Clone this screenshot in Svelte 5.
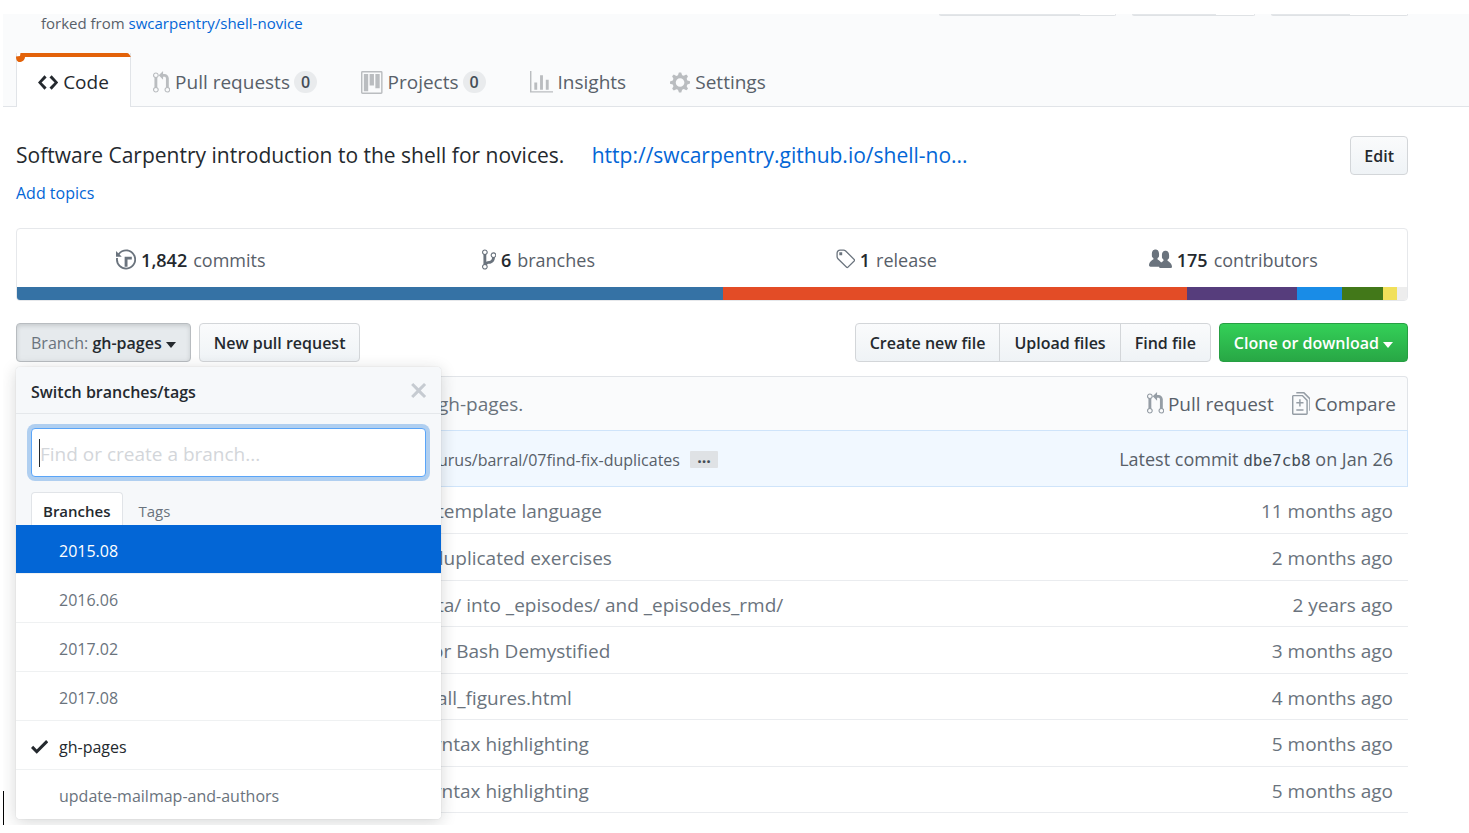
<script>
  const icons = {
    code: [14, 'M9.5 3L8 4.5 11.5 8 8 11.5 9.5 13 14 8 9.5 3zm-5 0L0 8l4.5 5L6 11.5 2.5 8 6 4.5 4.5 3z'],
    pull: [12, 'M11 11.28V5c-.03-.78-.34-1.47-.94-2.06C9.46 2.35 8.78 2.03 8 2H7V0L4 3l3 3V4h1c.27.02.48.11.69.31.21.2.3.42.31.69v6.28A1.993 1.993 0 0 0 10 15a1.993 1.993 0 0 0 1-3.72zm-1 2.92c-.66 0-1.2-.55-1.2-1.2 0-.65.55-1.2 1.2-1.2.65 0 1.2.55 1.2 1.2 0 .65-.55 1.2-1.2 1.2zM4 3c0-1.11-.89-2-2-2a1.993 1.993 0 0 0-1 3.72v6.56A1.993 1.993 0 0 0 2 15a1.993 1.993 0 0 0 1-3.72V4.72c.59-.34 1-.98 1-1.72zm-.8 10c0 .66-.55 1.2-1.2 1.2-.65 0-1.2-.55-1.2-1.2 0-.65.55-1.2 1.2-1.2.65 0 1.2.55 1.2 1.2zM2 4.2C1.34 4.2.8 3.65.8 3c0-.65.55-1.2 1.2-1.2.65 0 1.2.55 1.2 1.2 0 .65-.55 1.2-1.2 1.2z'],
    project: [15, 'M10 12h3V2h-3v10zm-4-2h3V2H6v8zm-4 4h3V2H2v12zm-1 1h13V1H1v14zM14 0H1a1 1 0 0 0-1 1v14a1 1 0 0 0 1 1h13a1 1 0 0 0 1-1V1a1 1 0 0 0-1-1z'],
    graph: [16, 'M16 14v1H0V0h1v14h15zM5 13H3V8h2v5zm4 0H7V3h2v10zm4 0h-2V6h2v7z'],
    gear: [14, 'M14 8.77v-1.6l-1.94-.64-.45-1.09.88-1.84-1.13-1.13-1.81.91-1.09-.45-.69-1.92h-1.6l-.63 1.94-1.11.45-1.84-.88-1.13 1.13.91 1.81-.45 1.09L0 7.23v1.59l1.94.64.45 1.09-.88 1.84 1.13 1.13 1.81-.91 1.09.45.69 1.92h1.59l.63-1.94 1.11-.45 1.84.88 1.13-1.13-.92-1.81.47-1.09L14 8.75v.02zM7 11c-1.66 0-3-1.34-3-3s1.34-3 3-3 3 1.34 3 3-1.34 3-3 3z'],
    history: [14, 'M8 13H6V6h5v2H8v5zM7 1C4.81 1 2.87 2.02 1.59 3.59L0 2v4h4L2.5 4.5C3.55 3.17 5.17 2.3 7 2.3c3.14 0 5.7 2.56 5.7 5.7s-2.56 5.7-5.7 5.7A5.71 5.71 0 0 1 1.3 8c0-.34.03-.67.09-1H.08C.03 7.33 0 7.66 0 8c0 3.86 3.14 7 7 7s7-3.14 7-7-3.14-7-7-7z'],
    branch: [10, 'M10 5c0-1.11-.89-2-2-2a1.993 1.993 0 0 0-1 3.72v.3c-.02.52-.23.98-.63 1.38-.4.4-.86.61-1.38.63-.83.02-1.48.16-2 .45V4.72a1.993 1.993 0 0 0-1-3.72C.88 1 0 1.89 0 3a2 2 0 0 0 1 1.72v6.56c-.59.35-1 .99-1 1.72 0 1.11.89 2 2 2 1.11 0 2-.89 2-2 0-.53-.2-1-.53-1.36.09-.06.48-.41.59-.47.25-.11.56-.17.94-.17 1.05-.05 1.95-.45 2.75-1.25S8.95 7.77 9 6.73h-.02C9.59 6.37 10 5.73 10 5zM2 1.8c.66 0 1.2.55 1.2 1.2 0 .65-.55 1.2-1.2 1.2C1.35 4.2.8 3.65.8 3c0-.65.55-1.2 1.2-1.2zm0 12.41c-.66 0-1.2-.55-1.2-1.2 0-.65.55-1.2 1.2-1.2.65 0 1.2.55 1.2 1.2 0 .65-.55 1.2-1.2 1.2zm6-8c-.66 0-1.2-.55-1.2-1.2 0-.65.55-1.2 1.2-1.2.65 0 1.2.55 1.2 1.2 0 .65-.55 1.2-1.2 1.2z'],
    tag: [14, 'M7.73 1.73C7.26 1.26 6.62 1 5.96 1H3.5C2.13 1 1 2.13 1 3.5v2.47c0 .66.27 1.3.73 1.77l6.06 6.06c.39.39 1.02.39 1.41 0l4.59-4.59a.996.996 0 0 0 0-1.41L7.73 1.73zM2.38 7.09c-.31-.3-.47-.7-.47-1.13V3.5c0-.88.72-1.59 1.59-1.59h2.47c.42 0 .83.16 1.13.47l6.14 6.13-4.73 4.73-6.13-6.15zM3.01 3h2v2H3V3h.01z'],
    people: [16, 'M16 12.999c0 .439-.45 1-1 1H7.995c-.539 0-.994-.447-.995-.999H1c-.54 0-1-.561-1-1 0-2.634 3-4 3-4s.229-.409 0-1c-.841-.621-1.058-.59-1-3 .058-2.419 1.367-3 2.5-3s2.442.58 2.5 3c.058 2.41-.159 2.379-1 3-.229.59 0 1 0 1s1.549.711 2.42 2.088C9.196 9.369 10 8.999 10 8.999s.229-.409 0-1c-.841-.62-1.058-.59-1-3 .058-2.419 1.367-3 2.5-3s2.437.581 2.495 3c.059 2.41-.158 2.38-1 3-.229.59 0 1 0 1s3.005 1.366 3.005 4z'],
    x: [12, 'M7.48 8l3.75 3.75-1.48 1.48L6 9.48l-3.75 3.75-1.48-1.48L4.52 8 .77 4.25l1.48-1.48L6 6.52l3.75-3.75 1.48 1.48z'],
    check: [12, 'M12 5l-8 8-4-4 1.5-1.5L4 10l6.5-6.5z'],
    diff: [13, 'M6 7h2v1H6v2H5V8H3V7h2V5h1v2zm-3 6h5v-1H3v1zM7.5 2L11 5.5V15c0 .55-.45 1-1 1H1c-.55 0-1-.45-1-1V3c0-.55.45-1 1-1h6.5zM10 6L7 3H1v12h9V6zM8.5 0H3v1h5l4 4v8h1V4.5L8.5 0z']
  };

  const tabs = [
    { name: 'Pull requests', icon: 'pull', count: 0 },
    { name: 'Projects', icon: 'project', count: 0 },
    { name: 'Insights', icon: 'graph' },
    { name: 'Settings', icon: 'gear' }
  ];

  const stats = [
    { icon: 'history', value: '1,842', label: 'commits' },
    { icon: 'branch', value: '6', label: 'branches' },
    { icon: 'tag', value: '1', label: 'release' },
    { icon: 'people', value: '175', label: 'contributors' }
  ];

  const languages = [
    { share: 706, color: '#3572a5' },
    { share: 464, color: '#e34c26' },
    { share: 110, color: '#563d7c' },
    { share: 45, color: '#198ce7' },
    { share: 41, color: '#427819' },
    { share: 14, color: '#f1e05a' },
    { share: 10, color: '#ededed' }
  ];

  const branches = ['2015.08', '2016.06', '2017.02', '2017.08', 'gh-pages', 'update-mailmap-and-authors'];
  let current = $state('gh-pages');
  let query = $state('');

  const files = [
    { message: 'template language', age: '11 months ago' },
    { message: 'duplicated exercises', age: '2 months ago', early: true },
    { message: 'ta/ into _episodes/ and _episodes_rmd/', age: '2 years ago' },
    { message: 'or Bash Demystified', age: '3 months ago', early: true },
    { message: 'all_figures.html', age: '4 months ago' },
    { message: 'yntax highlighting', age: '5 months ago', early: true },
    { message: 'yntax highlighting', age: '5 months ago', early: true }
  ];
</script>

{#snippet icon(name)}
  <svg class="icon {name}" viewBox="0 0 {icons[name][0]} 16" aria-hidden="true"><path fill-rule="evenodd" d={icons[name][1]} /></svg>
{/snippet}

<div class="page">
  <header>
    <div class="top">
      <p class="fork">forked from <a href="#top">swcarpentry/shell-novice</a></p>
      <div class="edges" aria-hidden="true">
        <span class="edge wide"></span><span class="edge mid"></span><span class="edge last"></span>
      </div>
    </div>
    <nav>
      <a class="tab active" href="#code">
        <svg class="stroke" viewBox="0 0 115 10" preserveAspectRatio="none" aria-hidden="true"><path d="M4.500 0H111C113 0 114 2 115 4H9C9 7 6 9 3.500 9 1 9 0 6.500 0 3.500L4 3Z" fill="#e36209" /></svg>
        {@render icon('code')}<span>Code</span>
      </a>
      {#each tabs as tab}
        <a class="tab" href="#{tab.icon}">
          {@render icon(tab.icon)}<span>{tab.name}</span>
          {#if tab.count !== undefined}<span class="count">{tab.count}</span>{/if}
        </a>
      {/each}
    </nav>
  </header>

  <main>
    <section class="about">
      <div>
        <h1>Software Carpentry introduction to the shell for novices. <a href="#site">http://swcarpentry.github.io/shell-no...</a></h1>
        <a class="topics" href="#topics">Add topics</a>
      </div>
      <button class="btn" type="button">Edit</button>
    </section>

    <section class="summary">
      <ul>
        {#each stats as s}
          <li><a href="#{s.label}">{@render icon(s.icon)}<strong>{s.value}</strong> <span>{s.label}</span></a></li>
        {/each}
      </ul>
      <div class="languages">
        {#each languages as l}<span style="flex-grow: {l.share}; background: {l.color}"></span>{/each}
      </div>
    </section>

    <section class="actions">
      <div class="picker">
        <button class="btn pressed" type="button" aria-expanded="true"><span class="light">Branch:</span> gh-pages<span class="caret"></span></button>
        <div class="menu">
          <div class="menu-head">
            <strong>Switch branches/tags</strong>
            <button type="button" aria-label="Close">{@render icon('x')}</button>
          </div>
          <div class="filter">
            <div class="field">
              <input type="text" aria-label="Find or create a branch" placeholder="Find or create a branch..." bind:value={query} />
              <span class="cursor"></span>
            </div>
            <div class="menu-tabs">
              <button type="button" class="selected">Branches</button>
              <button type="button">Tags</button>
            </div>
          </div>
          <ul class="list">
            {#each branches as b, i}
              <li>
                <button type="button" class:hot={i === 0} class:current={b === current} onclick={() => (current = b)}>
                  <span class="mark">{#if b === current}{@render icon('check')}{/if}</span>{b}
                </button>
              </li>
            {/each}
          </ul>
        </div>
      </div>
      <button class="btn" type="button">New pull request</button>
      <div class="group">
        <button class="btn" type="button">Create new file</button>
        <button class="btn" type="button">Upload files</button>
        <button class="btn" type="button">Find file</button>
      </div>
      <button class="btn primary" type="button">Clone or download<span class="caret"></span></button>
    </section>

    <section class="files">
      <div class="compare">
        <span class="message">gh-pages.</span>
        <a href="#pull">{@render icon('pull')}Pull request</a>
        <a href="#compare">{@render icon('diff')}Compare</a>
      </div>
      <div class="commit">
        <span class="message">urus/barral/07find-fix-duplicates</span>
        <button type="button" class="more">...</button>
        <span class="latest">Latest commit <code>dbe7cb8</code> on Jan 26</span>
      </div>
      <table>
        <tbody>
          {#each files as f}
            <tr>
              <td class="message" class:early={f.early}>{f.message}</td>
              <td class="age">{f.age}</td>
            </tr>
          {/each}
        </tbody>
      </table>
    </section>
  </main>
  <span class="page-cursor"></span>
</div>

<style>
  :global(body) { background: #fff; }
  .page, .page * { box-sizing: border-box; }
  .page {
    position: relative;
    margin: 14px 0 0 3px;
    padding-bottom: 12px;
    overflow: hidden;
    font-family: "Open Sans", "Noto Sans", sans-serif;
    font-size: 18px;
    line-height: 24px;
    color: #24292e;
  }
  button, input { font: inherit; color: inherit; margin: 0; }
  button { cursor: pointer; }
  a { color: #0366d6; text-decoration: none; }
  ul, p, h1 { margin: 0; padding: 0; list-style: none; font-weight: 400; }
  .icon { flex: none; height: 23px; fill: currentColor; }

  header { background: #fafbfc; border-bottom: 1px solid #e1e4e8; }
  .top { display: flex; justify-content: space-between; padding: 0 61px 15px 38px; }
  .fork { font-size: 15px; line-height: 18px; padding-bottom: 6px; color: #586069; }
  .edges { display: flex; gap: 16px; }
  .edge { height: 2px; border: 1px solid #dfe2e5; border-top: 0; border-radius: 0 0 3px 3px; background: linear-gradient(90deg, #e3e6e9 0 var(--split), #fff var(--split)); }
  .edge.wide { --split: 80%; width: 177px; }
  .edge.mid { --split: 69%; width: 123px; }
  .edge.last { --split: 58%; width: 137px; }
  nav { display: flex; padding-left: 13px; margin-bottom: -1px; font-size: 19px; }
  .tab { position: relative; display: flex; align-items: center; height: 54px; padding: 4px 22px 0; color: #586069; }
  .tab .icon { margin-right: 5px; color: #babdc0; }
  .tab.active { background: #fff; color: #24292e; border: 1px solid #e1e4e8; border-width: 0 1px; padding: 4px 21px 0; }
  .tab.active .icon { color: #24292e; }
  .stroke { position: absolute; left: -1px; top: 0; width: calc(100% + 2px); height: 10px; }
  .count { margin-left: 4px; min-width: 23px; text-align: center; font-size: 16px; font-weight: 600; line-height: 22px; border-radius: 11px; background: #e9ebed; color: #444d56; }

  main { padding: 0 61px 0 13px; }
  .about { display: flex; justify-content: space-between; align-items: flex-start; padding-top: 29px; }
  h1 { font-size: 21px; line-height: 38px; }
  h1 a { margin-left: 22px; }
  .topics { display: block; font-size: 16px; line-height: 38px; }

  .btn {
    height: 39px; padding: 1px 14px 0;
    border: 1px solid #d3d6d9; border-radius: 4px;
    background: linear-gradient(#fafbfc, #eff3f6);
    font-size: 16px; font-weight: 600; white-space: nowrap;
  }
  .about .btn { padding: 1px 13px 0; }
  .caret { display: inline-block; margin-left: 4px; vertical-align: middle; border: 5px solid transparent; border-top: 6px solid; border-bottom: 0; }
  .light { font-weight: 400; color: #6a737d; }
  .pressed { background: #e6eaed; border-color: #b8bcc0; box-shadow: inset 0 2px 4px rgba(27, 31, 35, 0.15); }
  .primary { color: #fff; border-color: #279f43; background: linear-gradient(#34d058, #28a745); }

  .summary { margin-top: 16px; border: 1px solid #e6e8eb; border-radius: 4px; overflow: hidden; }
  .summary ul { display: flex; }
  .summary li { flex: 1; display: flex; justify-content: center; }
  .summary li a { display: flex; align-items: center; height: 58px; padding-top: 3px; color: #586069; }
  .summary .icon { margin-right: 5px; color: #6a737d; }
  .summary strong { margin-right: 6px; font-weight: 600; color: #24292e; }
  .languages { display: flex; height: 13px; }
  .languages span { flex-basis: 0; }

  .actions { display: flex; gap: 8px; margin-top: 22px; }
  .picker { position: relative; }
  .group { display: flex; margin-left: auto; }
  .group .btn { border-radius: 0; }
  .group .btn + .btn { margin-left: -1px; }
  .group .btn:first-child { border-radius: 4px 0 0 4px; }
  .group .btn:last-child { border-radius: 0 4px 4px 0; }

  .menu {
    position: absolute; z-index: 2; top: 44px; left: 0; width: 425px;
    border-radius: 4px; background: #fff; overflow: hidden; font-size: 16px;
    box-shadow: 0 0 1px rgba(27, 31, 35, 0.25), 0 3px 16px rgba(27, 31, 35, 0.18);
  }
  .menu-head { display: flex; align-items: center; justify-content: space-between; height: 47px; padding: 4px 14px 0 15px; background: #f6f8fa; border-bottom: 1px solid #e5e8eb; }
  .menu-head strong { font-weight: 600; }
  .menu-head button { display: flex; padding: 0 0 4px; border: 0; background: none; color: #c6cbd1; }
  .filter { padding: 14px 15px 0; background: #f6f8fa; }
  .field { position: relative; }
  input { display: block; width: 100%; height: 49px; padding: 2px 8px 0; border: 1px solid #5aa5f8; border-radius: 4px; outline: 0; background: #fff; font-size: 19px; box-shadow: 0 0 0 4px #b0cff0; }
  input::placeholder { color: #d3d6da; opacity: 1; }
  .cursor { position: absolute; left: 8px; top: 11px; width: 1px; height: 28px; background: #24292e; }
  .menu-tabs { display: flex; margin-top: 15px; font-size: 15px; }
  .menu-tabs button { height: 33px; padding: 3px 11px 0; border: 1px solid transparent; border-bottom: 0; border-radius: 4px 4px 0 0; background: none; color: #6a737d; }
  .menu-tabs button + button { margin-left: 4px; }
  .menu-tabs .selected { border-color: #e1e4e8; background: #fff; color: #24292e; font-weight: 600; }
  .list button { display: flex; align-items: center; width: 100%; height: 49px; padding: 3px 15px 0; border: 0; border-bottom: 1px solid #eff1f2; background: #fff; color: #6a737d; text-align: left; }
  .list li:last-child button { border-bottom: 0; }
  .list .hot { background: #0366d6; color: #fff; }
  .list .current { color: #24292e; }
  .mark { display: flex; width: 28px; }

  .files { margin-top: 14px; color: #6a737d; font-size: 19px; }
  .compare { display: flex; align-items: center; gap: 18px; height: 54px; padding: 0 11px 0 0; border: 1px solid #e1e4e8; border-bottom: 0; border-radius: 4px 4px 0 0; background: #fafbfc; }
  .compare a { display: flex; align-items: center; color: #586069; }
  .compare .icon { margin-right: 4px; color: #959da5; }
  .compare .message { margin-right: auto; }
  .commit { display: flex; align-items: center; height: 57px; padding: 2px 14px 0 0; border: 1px solid #cfe4fa; background: #f1f8ff; color: #586069; }
  .commit .message { font-size: 16px; }
  .more { display: flex; align-items: center; justify-content: center; width: 28px; height: 17px; margin-left: 10px; padding: 0 0 6px; border: 0; border-radius: 1px; background: #dfe2e5; color: #444d56; font-size: 16px; font-weight: 700; }
  .latest { margin-left: auto; font-size: 18px; }
  code { font-family: "DejaVu Sans Mono", monospace; font-size: 16px; color: #444d56; }
  .message { padding: 0 0 0 421px; }
  table { width: 100%; border-collapse: collapse; }
  tr { height: 46px; }
  tr:nth-child(even) { height: 47px; }
  td, td.message { padding-top: 3px; padding-bottom: 0; border-bottom: 1px solid #eaecef; }
  td.early { padding-left: 416px; }
  td.age { padding-right: 15px; text-align: right; }
  .page-cursor { position: absolute; left: 0; bottom: 0; width: 1px; height: 34px; background: #000; }
</style>
